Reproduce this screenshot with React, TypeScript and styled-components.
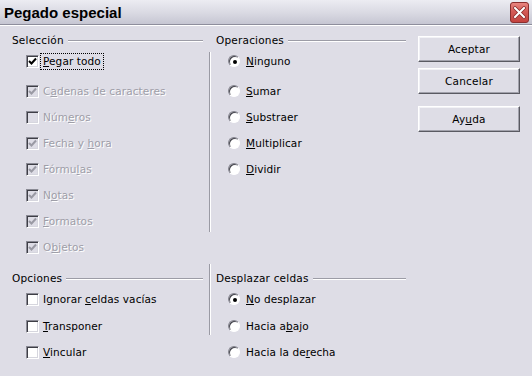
import React from "react";
import styled, { createGlobalStyle } from "styled-components";

const GlobalStyle = createGlobalStyle`
  html, body { margin: 0; padding: 0; background: #dedde6; }
  body { font-family: "DejaVu Sans", "Liberation Sans", sans-serif; font-size: 10.5px; color: #000; }
`;

const Window = styled.div`
  width: 532px;
  height: 376px;
  background: #dedde6;
  display: flex;
  flex-direction: column;
  overflow: hidden;
`;

const TitleBar = styled.div`
  height: 24px;
  display: flex;
  align-items: center;
  justify-content: space-between;
  padding: 0 3px 0 4px;
  background: linear-gradient(#ececf2, #d9d9e2 55%, #c6c6d2);
  border-bottom: 1px solid #8e8e9c;
`;

const TitleText = styled.span`
  font-family: "Liberation Sans Narrow", "Liberation Sans", sans-serif;
  font-weight: bold;
  font-size: 15px;
  color: #000;
  padding-top: 1px;
`;

const CloseButton = styled.div`
  width: 17px;
  height: 19px;
  margin-top: 1px;
  border: 1px solid #8a2e2e;
  border-radius: 3px;
  background-color: #cc4c48;
  background-image: linear-gradient(to bottom, #e88580 0%, #d35a56 45%, #c4423e 100%);
  display: flex;
  align-items: center;
  justify-content: center;
  flex: none;
`;

const Body = styled.div`
  flex: 1;
  display: flex;
  gap: 12px;
  padding: 6px 12px 0 12px;
  border-top: 1px solid #ffffff;
`;

const Main = styled.div`
  width: 394px;
  display: flex;
  flex-direction: column;
`;

const Section = styled.div<{ $top: number }>`
  display: flex;
  gap: 6px;
  margin-top: ${(p) => p.$top}px;
`;

const Group = styled.div<{ $width: number }>`
  width: ${(p) => p.$width}px;
  display: flex;
  flex-direction: column;
`;

const SideGroup = styled.div`
  flex: 1;
  display: flex;
  align-items: flex-start;
`;

const VLine = styled.div<{ $top: number; $height: number }>`
  width: 0;
  height: ${(p) => p.$height}px;
  margin-top: ${(p) => p.$top}px;
  border-left: 1px solid #9a9aa4;
  border-right: 1px solid #ffffff;
  flex: none;
`;

const SideContent = styled.div`
  flex: 1;
  padding-left: 5px;
  display: flex;
  flex-direction: column;
`;

const Legend = styled.div`
  height: 16px;
  display: flex;
  align-items: center;
  gap: 4px;
  white-space: nowrap;
  letter-spacing: 0.2px;
`;

const LegendLine = styled.div`
  flex: 1;
  height: 0;
  border-top: 1px solid #9c9ca6;
  border-bottom: 1px solid #ffffff;
  margin-top: 1px;
`;

const OptionList = styled.div<{ $indent: number }>`
  display: flex;
  flex-direction: column;
  padding-left: ${(p) => p.$indent}px;
`;

const OptionRow = styled.div<{ $gap: number; $extra?: number }>`
  height: 26px;
  display: flex;
  align-items: center;
  gap: ${(p) => p.$gap}px;
  margin-top: ${(p) => p.$extra ?? 0}px;
  white-space: nowrap;
`;

const Text = styled.span<{ $disabled?: boolean; $focus?: boolean }>`
  color: ${(p) => (p.$disabled ? "#9e9ea8" : "#000")};
  text-shadow: ${(p) => (p.$disabled ? "1px 1px 0 #ffffff" : "none")};
  outline: ${(p) => (p.$focus ? "1px dotted #000" : "none")};
  outline-offset: 1px;
  padding: 0 ${(p) => (p.$focus ? 1 : 0)}px;
  margin-left: ${(p) => (p.$focus ? -1 : 0)}px;
  line-height: 13px;
  letter-spacing: 0.1px;
`;

const Mn = styled.u`
  text-decoration: underline;
  text-underline-offset: 1px;
`;

const Box = styled.span<{ $disabled?: boolean }>`
  width: 11px;
  height: 11px;
  flex: none;
  display: flex;
  align-items: center;
  justify-content: center;
  border: 1px solid;
  border-color: #8a8a94 #ffffff #ffffff #8a8a94;
  box-shadow: inset 1px 1px 0 #3e3e46, inset -1px -1px 0 #d6d6de;
  background: ${(p) => (p.$disabled ? "#dedde6" : "#ffffff")};
`;

const RadioRing = styled.span`
  width: 10px;
  height: 10px;
  flex: none;
  border-radius: 50%;
  border: 1px solid;
  border-color: #82828c #ffffff #ffffff #82828c;
  box-shadow: inset 1px 1px 0 #44444c;
  background: #ffffff;
  display: flex;
  align-items: center;
  justify-content: center;
`;

const RadioDot = styled.span`
  width: 4px;
  height: 4px;
  border-radius: 50%;
  background: #000;
  margin: 1px 0 0 1px;
`;

const ButtonColumn = styled.div`
  width: 102px;
  display: flex;
  flex-direction: column;
  padding-top: 4px;
`;

const DialogButton = styled.button<{ $top: number }>`
  height: 26px;
  margin-top: ${(p) => p.$top}px;
  width: 102px;
  padding: 0;
  font-family: "DejaVu Sans", "Liberation Sans", sans-serif;
  font-size: 10.5px;
  letter-spacing: 0.2px;
  color: #000;
  background: #dedde6;
  border: 1px solid;
  border-color: #ffffff #5a5a62 #5a5a62 #ffffff;
  box-shadow: inset -1px -1px 0 #a2a2ac, inset 1px 1px 0 #f2f2f6;
`;

type Opt = { pre: string; mn: string; post: string; checked?: boolean; disabled?: boolean; focus?: boolean };

const Label = ({ o }: { o: Opt }) => (
  <Text $disabled={o.disabled} $focus={o.focus}>
    {o.pre}
    <Mn>{o.mn}</Mn>
    {o.post}
  </Text>
);

const CheckMark = ({ color }: { color: string }) => (
  <svg width="9" height="9" viewBox="0 0 9 9">
    <path d="M1 4 L3.5 6.5 L8 1.5" fill="none" stroke={color} strokeWidth="2" />
  </svg>
);

const CheckOption = ({ o, extra }: { o: Opt; extra?: number }) => (
  <OptionRow $gap={4} $extra={extra}>
    <Box $disabled={o.disabled}>{o.checked && <CheckMark color={o.disabled ? "#9a9aa4" : "#000"} />}</Box>
    <Label o={o} />
  </OptionRow>
);

const RadioOption = ({ o, extra }: { o: Opt; extra?: number }) => (
  <OptionRow $gap={6} $extra={extra}>
    <RadioRing>{o.checked && <RadioDot />}</RadioRing>
    <Label o={o} />
  </OptionRow>
);

const seleccion: Opt[] = [
  { pre: "", mn: "P", post: "egar todo", checked: true, focus: true },
  { pre: "C", mn: "a", post: "denas de caracteres", checked: true, disabled: true },
  { pre: "Núm", mn: "e", post: "ros", disabled: true },
  { pre: "Fecha y ", mn: "h", post: "ora", checked: true, disabled: true },
  { pre: "Fórmu", mn: "l", post: "as", checked: true, disabled: true },
  { pre: "N", mn: "o", post: "tas", checked: true, disabled: true },
  { pre: "", mn: "F", post: "ormatos", checked: true, disabled: true },
  { pre: "O", mn: "b", post: "jetos", checked: true, disabled: true },
];

const operaciones: Opt[] = [
  { pre: "", mn: "N", post: "inguno", checked: true },
  { pre: "", mn: "S", post: "umar" },
  { pre: "", mn: "S", post: "ubstraer" },
  { pre: "", mn: "M", post: "ultiplicar" },
  { pre: "", mn: "D", post: "ividir" },
];

const opciones: Opt[] = [
  { pre: "Ignorar ", mn: "c", post: "eldas vacías" },
  { pre: "", mn: "T", post: "ransponer" },
  { pre: "", mn: "V", post: "incular" },
];

const desplazar: Opt[] = [
  { pre: "", mn: "N", post: "o desplazar", checked: true },
  { pre: "Hacia a", mn: "b", post: "ajo" },
  { pre: "Hacia la de", mn: "r", post: "echa" },
];

const CloseIcon = () => (
  <CloseButton>
    <svg width="13" height="13" viewBox="0 0 13 13">
      <path d="M2 2 L11 11 M11 2 L2 11" stroke="#8a2a2a" strokeWidth="3.6" strokeLinecap="square" />
      <path d="M2 2 L11 11 M11 2 L2 11" stroke="#ffffff" strokeWidth="2" strokeLinecap="square" />
    </svg>
  </CloseButton>
);

export default function App() {
  return (
    <>
      <GlobalStyle />
      <Window>
        <TitleBar>
          <TitleText>Pegado especial</TitleText>
          <CloseIcon />
        </TitleBar>
        <Body>
          <Main>
            <Section $top={0}>
              <Group $width={191}>
                <Legend>
                  Selección
                  <LegendLine />
                </Legend>
                <OptionList $indent={14}>
                  {seleccion.map((o, i) => (
                    <CheckOption key={i} o={o} extra={i === 1 ? 4 : 0} />
                  ))}
                </OptionList>
              </Group>
              <SideGroup>
                <VLine $top={20} $height={180} />
                <SideContent>
                  <Legend>
                    Operaciones
                    <LegendLine />
                  </Legend>
                  <OptionList $indent={12}>
                    {operaciones.map((o, i) => (
                      <RadioOption key={i} o={o} extra={i === 1 ? 4 : 0} />
                    ))}
                  </OptionList>
                </SideContent>
              </SideGroup>
            </Section>
            <Section $top={10}>
              <Group $width={191}>
                <Legend>
                  Opciones
                  <LegendLine />
                </Legend>
                <OptionList $indent={14}>
                  {opciones.map((o, i) => (
                    <CheckOption key={i} o={o} extra={i === 1 ? 1 : 0} />
                  ))}
                </OptionList>
              </Group>
              <SideGroup>
                <VLine $top={-6} $height={71} />
                <SideContent>
                  <Legend>
                    Desplazar celdas
                    <LegendLine />
                  </Legend>
                  <OptionList $indent={12}>
                    {desplazar.map((o, i) => (
                      <RadioOption key={i} o={o} extra={i === 1 ? 1 : 0} />
                    ))}
                  </OptionList>
                </SideContent>
              </SideGroup>
            </Section>
          </Main>
          <ButtonColumn>
            <DialogButton $top={0}>Aceptar</DialogButton>
            <DialogButton $top={6}>Cancelar</DialogButton>
            <DialogButton $top={12}>
              Ay<Mn>u</Mn>da
            </DialogButton>
          </ButtonColumn>
        </Body>
      </Window>
    </>
  );
}
